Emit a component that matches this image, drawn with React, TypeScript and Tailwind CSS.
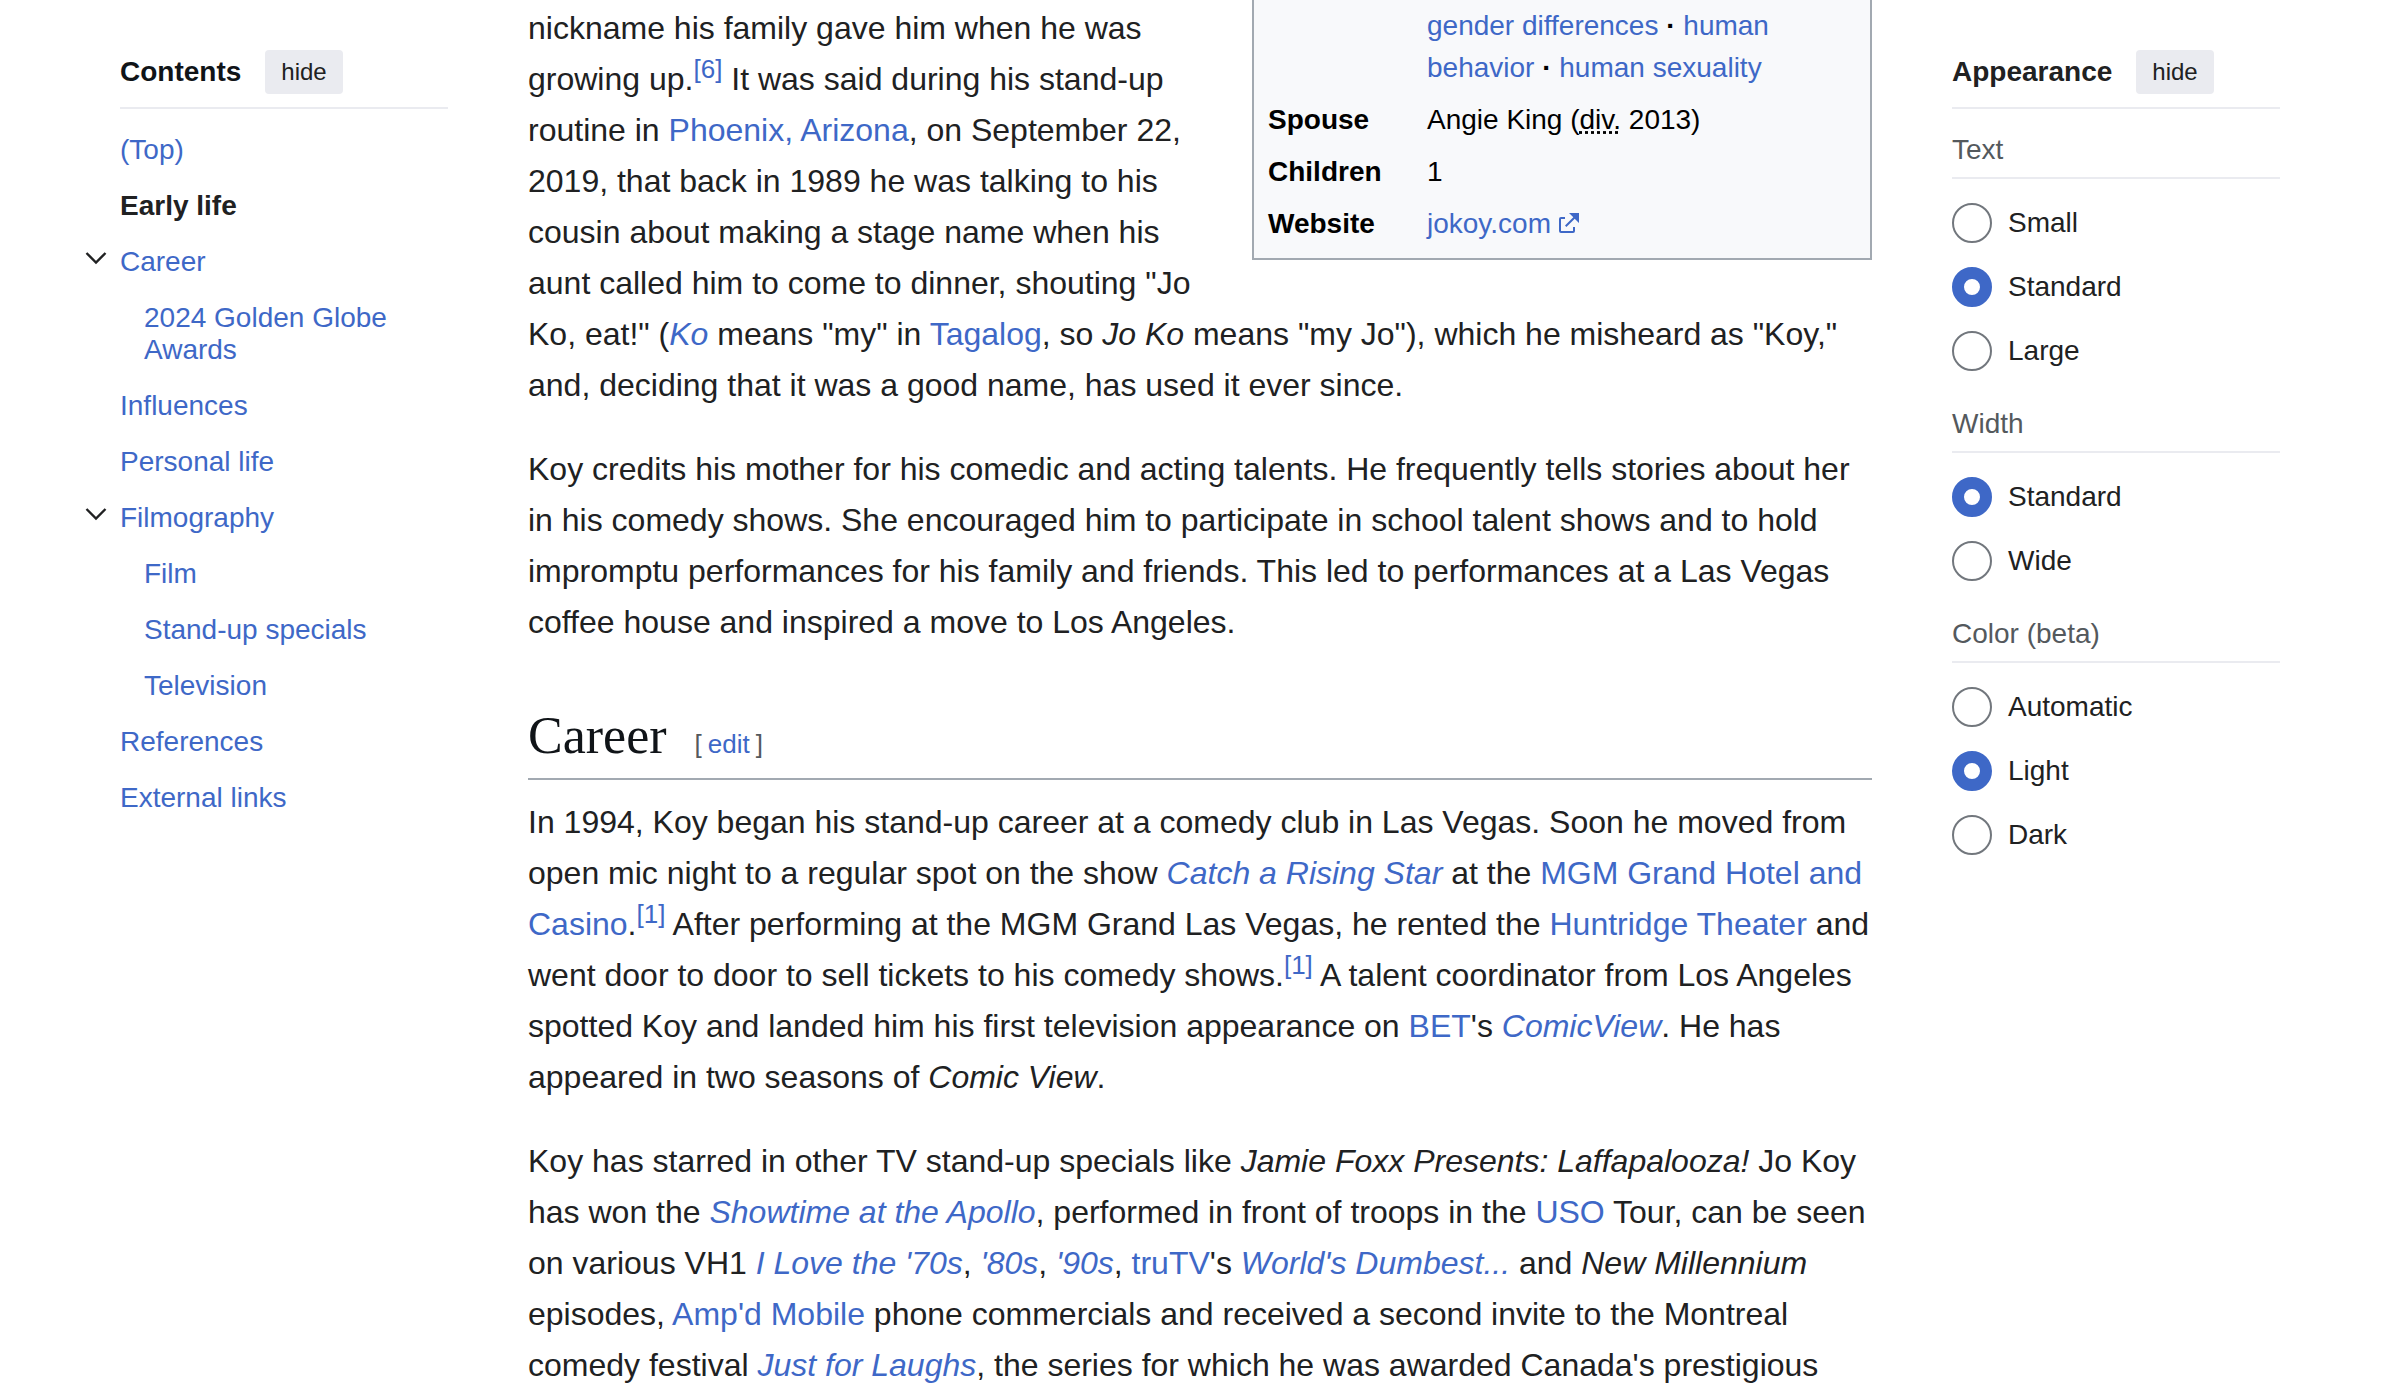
import { useState } from "react";
import type { ReactNode } from "react";

function A({ children, href = "#" }: { children: ReactNode; href?: string }) {
  return (
    <a href={href} className="text-[#3e68c7] hover:underline">
      {children}
    </a>
  );
}

function Cite({ n }: { n: number }) {
  return (
    <sup className="-top-3 text-[26px]">
      <A href={`#cite-${n}`}>[{n}]</A>
    </sup>
  );
}

function PanelHeader({ title, tone }: { title: string; tone: string }) {
  return (
    <div className="flex items-center gap-6 border-b-2 border-[#eaebf0] pt-[50px] pb-[13px]">
      <h2 className={`text-[28px] leading-8 font-bold ${tone}`}>{title}</h2>
      <button type="button" className="h-11 rounded bg-[#eaebf0] px-4 text-2xl leading-8 text-[#202122]">
        hide
      </button>
    </div>
  );
}

type Entry = { label: string; current?: boolean; children?: string[] };

const contents: Entry[] = [
  { label: "(Top)" },
  { label: "Early life", current: true },
  { label: "Career", children: ["2024 Golden Globe Awards"] },
  { label: "Influences" },
  { label: "Personal life" },
  { label: "Filmography", children: ["Film", "Stand-up specials", "Television"] },
  { label: "References" },
  { label: "External links" },
];

function ContentsItem({ entry }: { entry: Entry }) {
  const [open, setOpen] = useState(true);
  return (
    <li className="grid grid-cols-[24px_1fr] gap-x-3">
      {entry.children ? (
        <button
          type="button"
          aria-label={`Toggle ${entry.label} subsection`}
          aria-expanded={open}
          onClick={() => setOpen(!open)}
          className="flex h-12 items-center justify-center"
        >
          <svg width="24" height="24" viewBox="0 0 24 24" fill="none" stroke="#202122" strokeWidth="2.4">
            <path d="M2.5 7 12 16.5 21.5 7" />
          </svg>
        </button>
      ) : (
        <span />
      )}
      <div>
        <a
          href="#"
          className={
            entry.current
              ? "block py-3 font-bold text-[#202122]"
              : "block py-3 text-[#3e68c7] hover:underline"
          }
        >
          {entry.label}
        </a>
        {entry.children && open && (
          <ul className="pl-6">
            {entry.children.map((c) => (
              <li key={c}>
                <a href="#" className="block py-3 text-[#3e68c7] hover:underline">
                  {c}
                </a>
              </li>
            ))}
          </ul>
        )}
      </div>
    </li>
  );
}

function RadioGroup({ title, options, initial }: { title: string; options: string[]; initial: string }) {
  const [value, setValue] = useState(initial);
  return (
    <fieldset className="pb-3">
      <legend className="w-full border-b-2 border-[#eaebf0] pt-[25px] pb-[11px] text-[#54595d]">{title}</legend>
      <div className="flex flex-col gap-6 pt-6">
        {options.map((o) => (
          <label key={o} className="flex items-center gap-4">
            <input
              type="radio"
              name={title}
              checked={value === o}
              onChange={() => setValue(o)}
              className="size-10 appearance-none rounded-full border-2 border-[#72777d] bg-white checked:border-12 checked:border-[#3e68c7]"
            />
            {o}
          </label>
        ))}
      </div>
    </fieldset>
  );
}

function ExternalIcon() {
  return (
    <svg width="20" height="20" viewBox="1 1 10 10" className="ml-2 inline-block align-baseline" fill="#3e68c7">
      <path d="M6 1h5v5L8.86 3.85 4.7 8 4 7.3l4.15-4.16zM2 3h2v1H2v6h6V8h1v2a1 1 0 0 1-1 1H2a1 1 0 0 1-1-1V4a1 1 0 0 1 1-1" />
    </svg>
  );
}

function Infobox() {
  return (
    <div className="float-right mb-3.5 ml-7 w-[620px] border-x-2 border-b-2 border-[#a2a9b1] bg-[#f8f9fb] px-3.5 pb-2">
      <table className="w-full text-left text-[28px] leading-[42px] text-black">
        <tbody>
          <tr>
            <th scope="row" aria-label="Subjects" className="w-[159px]" />
            <td className="py-[5px]">
              <A>gender differences</A> <b>·</b> <A>human behavior</A> <b>·</b> <A>human sexuality</A>
            </td>
          </tr>
          <tr>
            <th scope="row" className="py-[5px]">Spouse</th>
            <td className="py-[5px]">
              Angie King (
              <abbr title="divorced" className="underline decoration-dotted">
                div.
              </abbr>{" "}
              2013)
            </td>
          </tr>
          <tr>
            <th scope="row" className="py-[5px]">Children</th>
            <td className="py-[5px]">1</td>
          </tr>
          <tr>
            <th scope="row" className="py-[5px]">Website</th>
            <td className="py-[5px]">
              <a href="#" className="text-[#3e68c7] hover:underline">
                jokoy.com
                <ExternalIcon />
              </a>
            </td>
          </tr>
        </tbody>
      </table>
    </div>
  );
}

export default function App() {
  return (
    <div className="h-screen overflow-hidden bg-white font-['Liberation_Sans',Arial,sans-serif] text-[#202122]">
      <div className="grid grid-cols-[364px_1fr_328px] gap-20 pr-[120px] pl-[84px]">
        <nav aria-label="Contents" className="text-[28px] leading-8">
          <div className="pl-9">
            <PanelHeader title="Contents" tone="text-[#101418]" />
          </div>
          <ul className="pt-[13px]">
            {contents.map((e) => (
              <ContentsItem key={e.label} entry={e} />
            ))}
          </ul>
        </nav>

        <main className="text-[32px] leading-[51px]">
          <Infobox />
          <p className="mb-[33px] pt-[3px]">
            nickname his family gave him when he was growing up.
            <Cite n={6} /> It was said during his stand-up routine in <A>Phoenix, Arizona</A>, on September 22, 2019,
            that back in 1989 he was talking to his cousin about making a stage name when his aunt called him to come to
            dinner, shouting "Jo Ko, eat!" (
            <i>
              <A>Ko</A>
            </i>{" "}
            means "my" in <A>Tagalog</A>, so <i>Jo Ko</i> means "my Jo"), which he misheard as "Koy," and, deciding that
            it was a good name, has used it ever since.
          </p>
          <p>
            Koy credits his mother for his comedic and acting talents. He frequently tells stories about her in his
            comedy shows. She encouraged him to participate in school talent shows and to hold impromptu performances for
            his family and friends. This led to performances at a Las Vegas coffee house and inspired a move to Los
            Angeles.
          </p>

          <div className="mt-[58px] mb-[17px] flex items-baseline gap-7 border-b-2 border-[#a2a9b1] pb-3">
            <h2 className="font-['Liberation_Serif',Georgia,serif] text-[52px] leading-[60px] text-[#101418]">Career</h2>
            <span className="flex gap-1.5 text-[26px] leading-8 text-[#54595d]">
              [<A>edit</A>]
            </span>
          </div>

          <p className="mb-[33px]">
            In 1994, Koy began his stand-up career at a comedy club in Las Vegas. Soon he moved from open mic night to a
            regular spot on the show{" "}
            <i>
              <A>Catch a Rising Star</A>
            </i>{" "}
            at the <A>MGM Grand Hotel and Casino</A>.<Cite n={1} /> After performing at the MGM Grand Las Vegas, he
            rented the <A>Huntridge Theater</A> and went door to door to sell tickets to his comedy shows.
            <Cite n={1} /> A talent coordinator from Los Angeles spotted Koy and landed him his first television
            appearance on <A>BET</A>'s{" "}
            <i>
              <A>ComicView</A>
            </i>
            . He has appeared in two seasons of <i>Comic View</i>.
          </p>
          <p>
            Koy has starred in other TV stand-up specials like <i>Jamie Foxx Presents: Laffapalooza!</i> Jo Koy has won
            the{" "}
            <i>
              <A>Showtime at the Apollo</A>
            </i>
            , performed in front of troops in the <A>USO</A> Tour, can be seen on various VH1{" "}
            <i>
              <A>I Love the '70s</A>
            </i>
            ,{" "}
            <i>
              <A>'80s</A>
            </i>
            ,{" "}
            <i>
              <A>'90s</A>
            </i>
            , <A>truTV</A>'s{" "}
            <i>
              <A>World's Dumbest...</A>
            </i>{" "}
            and <i>New Millennium</i> episodes, <A>Amp'd Mobile</A> phone commercials and received a second invite to the
            Montreal comedy festival{" "}
            <i>
              <A>Just for Laughs</A>
            </i>
            , the series for which he was awarded Canada's prestigious
          </p>
        </main>

        <aside aria-label="Appearance" className="text-[28px] leading-8">
          <PanelHeader title="Appearance" tone="text-[#202122]" />
          <RadioGroup title="Text" options={["Small", "Standard", "Large"]} initial="Standard" />
          <RadioGroup title="Width" options={["Standard", "Wide"]} initial="Standard" />
          <RadioGroup title="Color (beta)" options={["Automatic", "Light", "Dark"]} initial="Light" />
        </aside>
      </div>
    </div>
  );
}
